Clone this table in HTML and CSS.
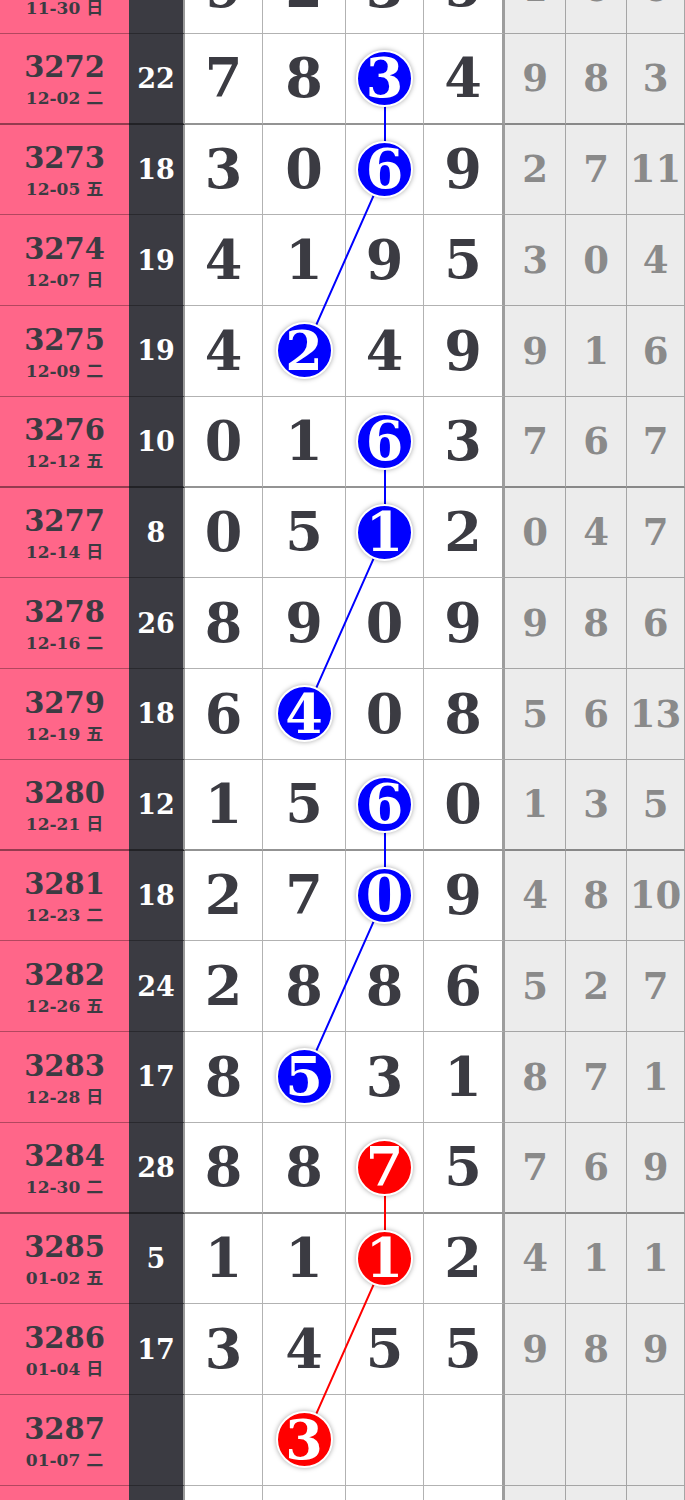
FILE: index.html
```html
<!DOCTYPE html>
<html lang="zh">
<head>
    <meta charset="UTF-8">
    <meta name="viewport" content="width=device-width, initial-scale=1.0">
    <title>走势图</title>
    <link rel="stylesheet" href="styles.css">
</head>
<body>
    <div class="board">
        <div class="row">
            <div class="issue"><b>3271</b><span>11-30 日</span></div>
            <div class="sum">17</div>
            <div class="n">9</div><div class="n">2</div><div class="n">3</div><div class="n last">5</div>
            <div class="m">1</div><div class="m">6</div><div class="m">6</div>
        </div>
        <div class="row grp">
            <div class="issue"><b>3272</b><span>12-02 二</span></div>
            <div class="sum">22</div>
            <div class="n">7</div><div class="n">8</div><div class="n"><span class="ball">3</span></div><div class="n last">4</div>
            <div class="m">9</div><div class="m">8</div><div class="m">3</div>
        </div>
        <div class="row">
            <div class="issue"><b>3273</b><span>12-05 五</span></div>
            <div class="sum">18</div>
            <div class="n">3</div><div class="n">0</div><div class="n"><span class="ball">6</span></div><div class="n last">9</div>
            <div class="m">2</div><div class="m">7</div><div class="m">11</div>
        </div>
        <div class="row">
            <div class="issue"><b>3274</b><span>12-07 日</span></div>
            <div class="sum">19</div>
            <div class="n">4</div><div class="n">1</div><div class="n">9</div><div class="n last">5</div>
            <div class="m">3</div><div class="m">0</div><div class="m">4</div>
        </div>
        <div class="row">
            <div class="issue"><b>3275</b><span>12-09 二</span></div>
            <div class="sum">19</div>
            <div class="n">4</div><div class="n"><span class="ball">2</span></div><div class="n">4</div><div class="n last">9</div>
            <div class="m">9</div><div class="m">1</div><div class="m">6</div>
        </div>
        <div class="row grp">
            <div class="issue"><b>3276</b><span>12-12 五</span></div>
            <div class="sum">10</div>
            <div class="n">0</div><div class="n">1</div><div class="n"><span class="ball">6</span></div><div class="n last">3</div>
            <div class="m">7</div><div class="m">6</div><div class="m">7</div>
        </div>
        <div class="row">
            <div class="issue"><b>3277</b><span>12-14 日</span></div>
            <div class="sum">8</div>
            <div class="n">0</div><div class="n">5</div><div class="n"><span class="ball">1</span></div><div class="n last">2</div>
            <div class="m">0</div><div class="m">4</div><div class="m">7</div>
        </div>
        <div class="row">
            <div class="issue"><b>3278</b><span>12-16 二</span></div>
            <div class="sum">26</div>
            <div class="n">8</div><div class="n">9</div><div class="n">0</div><div class="n last">9</div>
            <div class="m">9</div><div class="m">8</div><div class="m">6</div>
        </div>
        <div class="row">
            <div class="issue"><b>3279</b><span>12-19 五</span></div>
            <div class="sum">18</div>
            <div class="n">6</div><div class="n"><span class="ball">4</span></div><div class="n">0</div><div class="n last">8</div>
            <div class="m">5</div><div class="m">6</div><div class="m">13</div>
        </div>
        <div class="row grp">
            <div class="issue"><b>3280</b><span>12-21 日</span></div>
            <div class="sum">12</div>
            <div class="n">1</div><div class="n">5</div><div class="n"><span class="ball">6</span></div><div class="n last">0</div>
            <div class="m">1</div><div class="m">3</div><div class="m">5</div>
        </div>
        <div class="row">
            <div class="issue"><b>3281</b><span>12-23 二</span></div>
            <div class="sum">18</div>
            <div class="n">2</div><div class="n">7</div><div class="n"><span class="ball">0</span></div><div class="n last">9</div>
            <div class="m">4</div><div class="m">8</div><div class="m">10</div>
        </div>
        <div class="row">
            <div class="issue"><b>3282</b><span>12-26 五</span></div>
            <div class="sum">24</div>
            <div class="n">2</div><div class="n">8</div><div class="n">8</div><div class="n last">6</div>
            <div class="m">5</div><div class="m">2</div><div class="m">7</div>
        </div>
        <div class="row">
            <div class="issue"><b>3283</b><span>12-28 日</span></div>
            <div class="sum">17</div>
            <div class="n">8</div><div class="n"><span class="ball">5</span></div><div class="n">3</div><div class="n last">1</div>
            <div class="m">8</div><div class="m">7</div><div class="m">1</div>
        </div>
        <div class="row grp">
            <div class="issue"><b>3284</b><span>12-30 二</span></div>
            <div class="sum">28</div>
            <div class="n">8</div><div class="n">8</div><div class="n"><span class="ball red">7</span></div><div class="n last">5</div>
            <div class="m">7</div><div class="m">6</div><div class="m">9</div>
        </div>
        <div class="row">
            <div class="issue"><b>3285</b><span>01-02 五</span></div>
            <div class="sum">5</div>
            <div class="n">1</div><div class="n">1</div><div class="n"><span class="ball red">1</span></div><div class="n last">2</div>
            <div class="m">4</div><div class="m">1</div><div class="m">1</div>
        </div>
        <div class="row">
            <div class="issue"><b>3286</b><span>01-04 日</span></div>
            <div class="sum">17</div>
            <div class="n">3</div><div class="n">4</div><div class="n">5</div><div class="n last">5</div>
            <div class="m">9</div><div class="m">8</div><div class="m">9</div>
        </div>
        <div class="row">
            <div class="issue"><b>3287</b><span>01-07 二</span></div>
            <div class="sum"></div>
            <div class="n"></div><div class="n"><span class="ball red">3</span></div><div class="n"></div><div class="n last"></div>
            <div class="m"></div><div class="m"></div><div class="m"></div>
        </div>
        <div class="row">
            <div class="issue"></div>
            <div class="sum"></div>
            <div class="n"></div><div class="n"></div><div class="n"></div><div class="n last"></div>
            <div class="m"></div><div class="m"></div><div class="m"></div>
        </div>

        <!-- trend lines, one per group of draws -->
        <svg class="trend" width="685" height="1634" viewBox="0 0 685 1634">
            <polyline class="blue" points="385,136.1 385,226.9 304.5,408.4"/>
            <polyline class="blue" points="385,499.1 385,589.9 304.5,771.4"/>
            <polyline class="blue" points="385,862.1 385,952.9 304.5,1134.4"/>
            <polyline class="red" points="385,1225.1 385,1315.9 304.5,1497.4"/>
        </svg>
    </div>
</body>
</html>
```

FILE: styles.css
```css
body {
    margin: 0;
    background-color: #fff;
    font-family: "DejaVu Serif", "Noto Sans CJK SC", serif;
    font-weight: bold;
}
.board {
    position: relative;
    width: 685px;
    margin-top: -57px;
}
.row {
    display: grid;
    grid-template-columns: 129px 56px 78px 83px 78px 81px 61px 61px 58px;
    height: 90.75px;
}
.row > div {
    display: flex;
    align-items: center;
    justify-content: center;
    box-sizing: border-box;
    border-right: 1px solid rgba(0, 0, 0, 0.3);
    border-bottom: 1px solid rgba(0, 0, 0, 0.3);
}
.row.grp > div {
    border-bottom: 2px solid rgba(0, 0, 0, 0.42);
}
.issue {
    flex-direction: column;
    background-color: #ff6689;
    color: #3b3b42;
    line-height: 1;
    padding-top: 4px;
}
.row > .issue {
    border-right: none;
}
.issue b {
    font-size: 29px;
}
.issue span {
    font-size: 17px;
    margin-top: 8px;
}
.sum {
    background-color: #3b3b42;
    color: #fff;
    font-size: 27px;
}
.row > .sum {
    border-right: 2px solid #9a9a9a;
}
.n {
    font-size: 54px;
    color: #3b3b42;
}
.row > .last {
    border-right: 3px solid rgba(0, 0, 0, 0.38);
}
.m {
    background-color: #ececec;
    color: #8a8a8a;
    font-size: 37px;
}
.ball {
    position: relative;
    z-index: 2;
    display: flex;
    align-items: center;
    justify-content: center;
    width: 57px;
    height: 57px;
    box-sizing: border-box;
    border: 2.5px solid #fff;
    border-radius: 50%;
    background-color: #0000ff;
    color: #fff;
    line-height: 1;
    box-shadow: 0 0 5px rgba(0, 0, 0, 0.35);
}
.ball.red {
    background-color: #ff0000;
}
.trend {
    position: absolute;
    top: 0;
    left: 0;
    z-index: 1;
    pointer-events: none;
}
.trend polyline {
    fill: none;
    stroke-width: 2;
}
.trend .blue {
    stroke: #0000ff;
}
.trend .red {
    stroke: #ff0000;
}
```
